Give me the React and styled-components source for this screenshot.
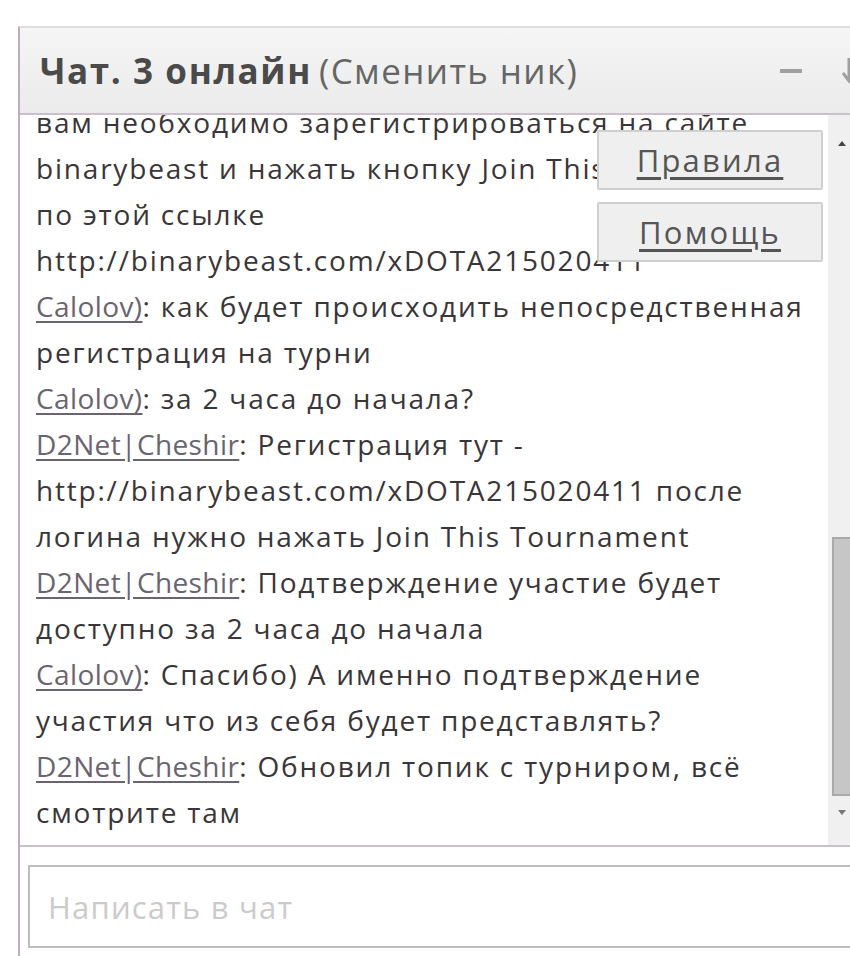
import styled, { createGlobalStyle } from 'styled-components';

const GlobalStyle = createGlobalStyle`
  body {
    margin: 0;
    background: #ffffff;
    font-family: "Open Sans", "Noto Sans", sans-serif;
  }
`;

const Page = styled.div`
  padding: 26px 0 0 18px;
  height: 930px;
  overflow: hidden;
`;

const Widget = styled.div`
  width: 830px;
  height: 940px;
  display: flex;
  flex-direction: column;
  border-left: 2px solid #bcaebc;
  border-top: 2px solid #dedede;
  background: #fff;
`;

const Header = styled.div`
  height: 85px;
  flex-shrink: 0;
  display: flex;
  align-items: center;
  padding-left: 20px;
  background: linear-gradient(#f5f5f5, #ebebeb);
  border-bottom: 2px solid #cabfca;
  color: #555;
  font-size: 35px;
`;

const Title = styled.b`
  font-weight: 700;
  color: #4a4a4a;
  letter-spacing: 1.6px;
`;

const Nick = styled.span`
  margin-left: 7px;
  font-weight: 400;
  color: #666;
  letter-spacing: 1.4px;
`;

const Controls = styled.div`
  margin-left: auto;
  margin-right: -6px;
  display: flex;
  align-items: center;
  gap: 40px;
`;

const Minimize = styled.span`
  width: 22px;
  height: 4px;
  background: #a0a0a0;
`;

const Body = styled.div`
  height: 730px;
  flex-shrink: 0;
  display: flex;
  border-bottom: 2px solid #cabfca;
`;

const Messages = styled.div`
  position: relative;
  flex: 1;
  display: flex;
  flex-direction: column;
  justify-content: flex-end;
  overflow: hidden;
  padding: 0 20px 10px 16px;
  color: #3a3539;
  font-size: 28px;
  line-height: 46px;
  letter-spacing: 1.8px;
`;

const Line = styled.div`
  white-space: pre-line;
`;

const Author = styled.a`
  color: #6a6370;
  letter-spacing: 0.4px;
  text-decoration: underline;
  text-underline-offset: 4px;
`;

const Side = styled.div`
  position: absolute;
  top: 15px;
  right: 5px;
  display: flex;
  flex-direction: column;
  gap: 12px;
`;

const SideButton = styled.a`
  width: 222px;
  height: 56px;
  display: flex;
  align-items: center;
  justify-content: center;
  background: #efefef;
  border: 2px solid #cfcfcf;
  border-radius: 2px;
  color: #555;
  font-size: 31px;
  letter-spacing: 2.2px;
  text-decoration: underline;
  text-underline-offset: 5px;
`;

const Track = styled.div`
  width: 18px;
  flex-shrink: 0;
  display: flex;
  flex-direction: column;
  background: #f0f0f0;
  padding: 26px 0 30px 4px;
`;

const Arrow = styled.svg`
  display: block;
  margin-left: 6px;
`;

const Spacer = styled.div`
  flex: 1;
`;

const Thumb = styled.div`
  height: 255px;
  background: #c6c6c6;
  border: 2px solid #a9a9a9;
  border-right: none;
  margin-bottom: 14px;
`;

const Composer = styled.div`
  padding: 18px 0 0 8px;
`;

const Input = styled.input`
  box-sizing: border-box;
  width: 900px;
  height: 83px;
  border: 2px solid #bdbdbd;
  padding: 0 18px;
  font-family: "Open Sans", sans-serif;
  font-size: 31px;
  letter-spacing: 1.2px;
  outline: none;
  &::placeholder {
    color: #cbcbcb;
  }
`;

const messages = [
  { author: 'D2Net|Cheshir', text: 'Для участия в турнире\nвам необходимо зарегистрироваться на сайте binarybeast и нажать кнопку Join This Tournament по этой ссылке http://binarybeast.com/xDOTA215020411' },
  { author: 'Calolov)', text: 'как будет происходить непосредственная регистрация на турни' },
  { author: 'Calolov)', text: 'за 2 часа до начала?' },
  { author: 'D2Net|Cheshir', text: 'Регистрация тут - http://binarybeast.com/xDOTA215020411 после логина нужно нажать Join This Tournament' },
  { author: 'D2Net|Cheshir', text: 'Подтверждение участие будет доступно за 2 часа до начала' },
  { author: 'Calolov)', text: 'Спасибо) А именно подтверждение участия что из себя будет представлять?' },
  { author: 'D2Net|Cheshir', text: 'Обновил топик с турниром, всё смотрите там' },
];

export default function App() {
  return (
    <>
      <GlobalStyle />
      <Page>
        <Widget>
          <Header>
            <Title>Чат. 3 онлайн</Title>
            <Nick>(Сменить ник)</Nick>
            <Controls>
              <Minimize />
              <svg width="14" height="26" viewBox="0 0 14 26">
                <path d="M7 0 V22 M1 15 L7 23 L13 15" stroke="#a0a0a0" strokeWidth="3" fill="none" />
              </svg>
            </Controls>
          </Header>
          <Body>
            <Messages>
              {messages.map((m, i) => (
                <Line key={i}>
                  <Author>{m.author}</Author>: {m.text}
                </Line>
              ))}
              <Side>
                <SideButton>Правила</SideButton>
                <SideButton>Помощь</SideButton>
              </Side>
            </Messages>
            <Track>
              <Arrow width="8" height="5" viewBox="0 0 8 5">
                <path d="M0 5 L4 0 L8 5 Z" fill="#444" />
              </Arrow>
              <Spacer />
              <Thumb />
              <Arrow width="8" height="5" viewBox="0 0 8 5">
                <path d="M0 0 L4 5 L8 0 Z" fill="#777" />
              </Arrow>
            </Track>
          </Body>
          <Composer>
            <Input placeholder="Написать в чат" />
          </Composer>
        </Widget>
      </Page>
    </>
  );
}
